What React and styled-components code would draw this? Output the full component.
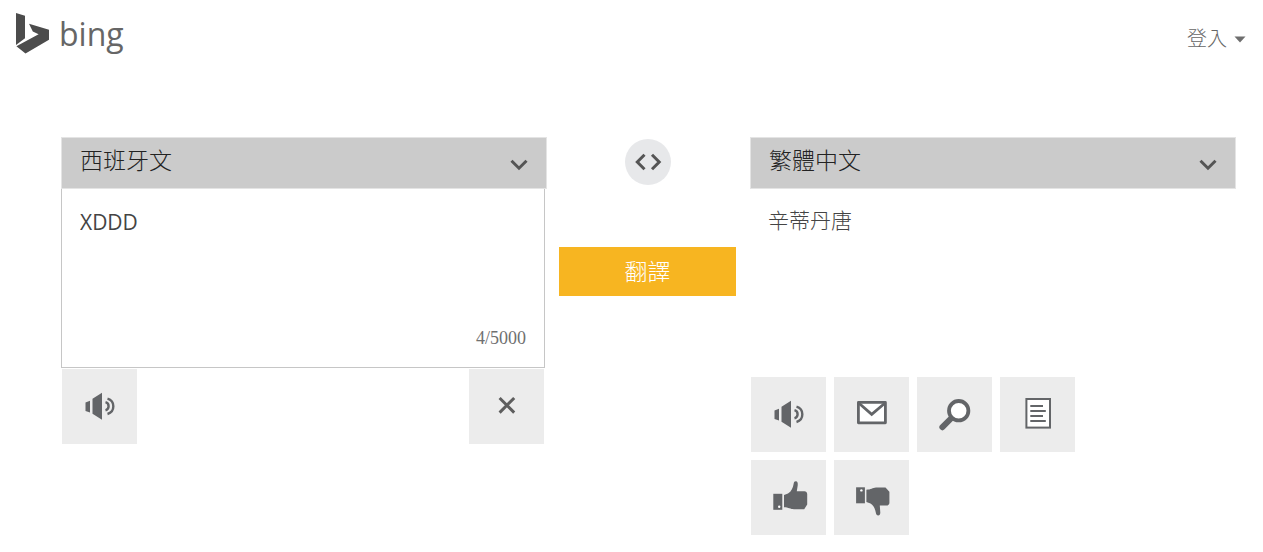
import React, { useState } from "react";
import styled, { createGlobalStyle } from "styled-components";

const GlobalStyle = createGlobalStyle`
  * { box-sizing: border-box; }
  body {
    margin: 0;
    background: #fff;
    color: #444;
    font-family: "Open Sans", "Noto Sans CJK TC", sans-serif;
    font-weight: 300;
  }
  button, select, textarea { font: inherit; color: inherit; }
`;

const Header = styled.header`
  display: flex;
  justify-content: space-between;
  align-items: flex-start;
  padding: 12px 16px 0;
`;

const Brand = styled.a`
  display: flex;
  gap: 9px;
  color: #666;
  text-decoration: none;
`;

const BrandMark = styled.svg`
  width: 34px;
  height: 42px;
  fill: #4c4c4c;
`;

const BrandName = styled.span`
  font-family: "Open Sans", sans-serif;
  font-size: 32px;
  font-weight: 400;
  line-height: 44px;
`;

const SignIn = styled.button`
  display: flex;
  align-items: center;
  gap: 7px;
  margin-top: 13px;
  padding: 0 1px;
  border: 0;
  background: none;
  color: #666;
  font-size: 20px;
  line-height: 28px;
`;

const Caret = styled.svg`
  width: 12px;
  height: 7px;
  fill: #6e6e6e;
`;

const Main = styled.main`
  display: flex;
  align-items: flex-start;
  padding: 81px 27px 16px 61px;
`;

const Column = styled.section`
  flex: 1;
  min-width: 0;
`;

const Middle = styled.div`
  flex: 0 0 177px;
  display: flex;
  flex-direction: column;
  align-items: center;
  gap: 62px;
  margin: 0 14px 0 12px;
  padding-top: 2px;
`;

const LanguageField = styled.div`
  display: grid;
  align-items: center;
  height: 52px;
  border: 1px solid #e4e4e4;
  background: #cbcbcb;

  > * { grid-area: 1 / 1; }
`;

const LanguageSelect = styled.select`
  width: 100%;
  height: 50px;
  padding: 0 48px 6px 18px;
  border: 0;
  border-radius: 0;
  appearance: none;
  background: transparent;
  color: #222;
  font-size: 23px;
`;

const Chevron = styled.svg`
  justify-self: end;
  width: 18px;
  height: 12px;
  margin: 4px 18px 0 0;
  fill: none;
  stroke: #555;
  stroke-width: 3;
  pointer-events: none;
`;

const InputBox = styled.div`
  display: flex;
  flex-direction: column;
  margin-right: 2px;
  border: 1px solid #c6c6c6;
  border-top: 0;
  padding: 19px 18px 18px;
`;

const SourceText = styled.textarea`
  display: block;
  width: 100%;
  height: 120px;
  padding: 0;
  border: 0;
  outline: 0;
  resize: none;
  background: transparent;
  font-weight: 400;
  font-size: 21px;
  line-height: 28px;
`;

const Counter = styled.span`
  align-self: flex-end;
  color: #707070;
  font-family: "Liberation Serif", serif;
  font-size: 18px;
  font-weight: 400;
  line-height: 21px;
`;

const InputActions = styled.div`
  display: flex;
  justify-content: space-between;
  margin: 1px 3px 0 1px;
`;

const Result = styled.p`
  min-height: 188px;
  margin: 0;
  padding: 16px 18px;
  font-size: 21px;
  line-height: 30px;
`;

const ResultActions = styled.div`
  display: grid;
  grid-template-columns: repeat(4, 75px);
  gap: 8px;
  padding-left: 1px;
`;

const Tile = styled.button`
  display: block;
  width: 75px;
  height: 75px;
  padding: 0;
  border: 0;
  background: #ececec;
`;

const TileIcon = styled.svg`
  display: block;
  width: 75px;
  height: 75px;
  fill: #636568;
`;

const SwapButton = styled.button`
  width: 46px;
  height: 46px;
  padding: 0;
  border: 0;
  border-radius: 50%;
  background: #e7e8ea;
`;

const SwapIcon = styled.svg`
  display: block;
  width: 46px;
  height: 46px;
  fill: none;
  stroke: #555;
  stroke-width: 3;
`;

const TranslateButton = styled.button`
  width: 100%;
  height: 49px;
  padding: 0 0 4px;
  border: 0;
  background: #f7b521;
  color: #fff;
  font-size: 23px;
`;

const INK = "#636568";

const icons = {
  speaker: (
    <>
      <path d="M23.5 33.5 28 31.8V43.5L23.5 42ZM30.5 29.8 40 23.7V50.7L30.5 44.8Z" />
      <path
        d="M43.5 33.2A4.2 4.2 0 0 1 43.5 41.3M45.5 29.6A8 8 0 0 1 45.5 45"
        fill="none"
        stroke={INK}
        strokeWidth="2.4"
      />
    </>
  ),
  clear: (
    <path d="M30.6 29 45.2 43.6M45.2 29 30.6 43.6" stroke="#5e5e5e" strokeWidth="3" />
  ),
  mail: (
    <>
      <rect x="24.4" y="25.4" width="27" height="20.4" fill="#fff" stroke={INK} strokeWidth="2.8" strokeLinejoin="round" />
      <path d="M25 26.3 37.7 37.3 50.8 26.3" fill="none" stroke={INK} strokeWidth="2.8" />
    </>
  ),
  search: (
    <>
      <path d="M35 40.5 25.4 50.2" stroke={INK} strokeWidth="6" strokeLinecap="round" />
      <circle cx="41.7" cy="33.7" r="9.7" fill="#fff" stroke={INK} strokeWidth="3.8" />
    </>
  ),
  page: (
    <>
      <rect x="26.4" y="22" width="23.6" height="28.6" fill="#fff" stroke={INK} strokeWidth="2" />
      <path d="M30.3 29H43M30.3 34H45.8M30.3 39H43M30.3 44H45.8" stroke={INK} strokeWidth="2" />
    </>
  ),
  up: (
    <>
      <rect x="22.3" y="33.8" width="9" height="16" />
      <circle cx="28.2" cy="46.8" r="1.2" fill="#fff" />
      <path d="M33 35 37 33.5C40.5 31.5 42 27.5 42.6 24 42.9 22 43.5 21.3 44.8 21.3 46.6 21.4 47 23 46.7 25.5L45.8 31.2H53.5C55 31.2 56.2 32.5 56.2 34V44.6L53.2 49.2H43C39.5 49.2 37.5 47.2 33 47.2Z" />
    </>
  ),
  down: (
    <>
      <rect x="22.1" y="27.3" width="8.8" height="16" />
      <circle cx="27.4" cy="30.4" r="1.2" fill="#fff" />
      <path d="M32.4 29.8C37 29.8 38.5 27.8 42 27.6H51.5L55.4 31.8V43C55.4 44.5 54 45.6 52.5 45.6H45.8L46.3 52.5C46.4 54.4 45.6 55.4 44.2 55.4 42.8 55.4 42.2 54.6 41.9 53 41.3 49.5 39.8 45.5 36.5 43.5L32.4 42Z" />
    </>
  ),
};

function IconTile({ icon, label, onClick }) {
  return (
    <Tile type="button" aria-label={label} onClick={onClick}>
      <TileIcon viewBox="0 0 75 75" aria-hidden="true">{icons[icon]}</TileIcon>
    </Tile>
  );
}

function LanguagePicker({ label, value, onChange }) {
  return (
    <LanguageField>
      <LanguageSelect aria-label={label} value={value} onChange={(e) => onChange(e.target.value)}>
        <option>西班牙文</option>
        <option>繁體中文</option>
      </LanguageSelect>
      <Chevron viewBox="0 0 18 12" aria-hidden="true">
        <path d="M1.5 1.8 9 9.2 16.5 1.8" />
      </Chevron>
    </LanguageField>
  );
}

export default function App() {
  const [from, setFrom] = useState("西班牙文");
  const [to, setTo] = useState("繁體中文");
  const [text, setText] = useState("XDDD");

  const swap = () => {
    setFrom(to);
    setTo(from);
  };

  return (
    <>
      <GlobalStyle />
      <Header>
        <Brand href="#">
          <BrandMark viewBox="0 0 34 42" aria-hidden="true">
            <path d="M0 1 9 3.7V26.2L0 33Z" />
            <path d="M0.4 34.2 22.6 22.2 16.8 19.6 13 11.8 33 17.8V27.8L9.5 41.5Z" />
          </BrandMark>
          <BrandName>bing</BrandName>
        </Brand>
        <SignIn type="button">
          登入
          <Caret viewBox="0 0 12 7" aria-hidden="true">
            <path d="M0.5 0.5H11.5L6 6.5Z" />
          </Caret>
        </SignIn>
      </Header>
      <Main>
        <Column>
          <LanguagePicker label="來源語言" value={from} onChange={setFrom} />
          <InputBox>
            <SourceText
              aria-label="原文"
              maxLength={5000}
              spellCheck={false}
              value={text}
              onChange={(e) => setText(e.target.value)}
            />
            <Counter>{text.length}/5000</Counter>
          </InputBox>
          <InputActions>
            <IconTile icon="speaker" label="朗讀原文" />
            <IconTile icon="clear" label="清除" onClick={() => setText("")} />
          </InputActions>
        </Column>
        <Middle>
          <SwapButton type="button" aria-label="交換語言" onClick={swap}>
            <SwapIcon viewBox="0 0 46 46" aria-hidden="true">
              <path d="M19.5 15.8 12.3 23 19.5 30.2M27 15.8 34.2 23 27 30.2" />
            </SwapIcon>
          </SwapButton>
          <TranslateButton type="button">翻譯</TranslateButton>
        </Middle>
        <Column>
          <LanguagePicker label="目標語言" value={to} onChange={setTo} />
          <Result>辛蒂丹唐</Result>
          <ResultActions>
            <IconTile icon="speaker" label="朗讀譯文" />
            <IconTile icon="mail" label="電子郵件" />
            <IconTile icon="search" label="搜尋" />
            <IconTile icon="page" label="檢視全文" />
            <IconTile icon="up" label="好" />
            <IconTile icon="down" label="不好" />
          </ResultActions>
        </Column>
      </Main>
    </>
  );
}
